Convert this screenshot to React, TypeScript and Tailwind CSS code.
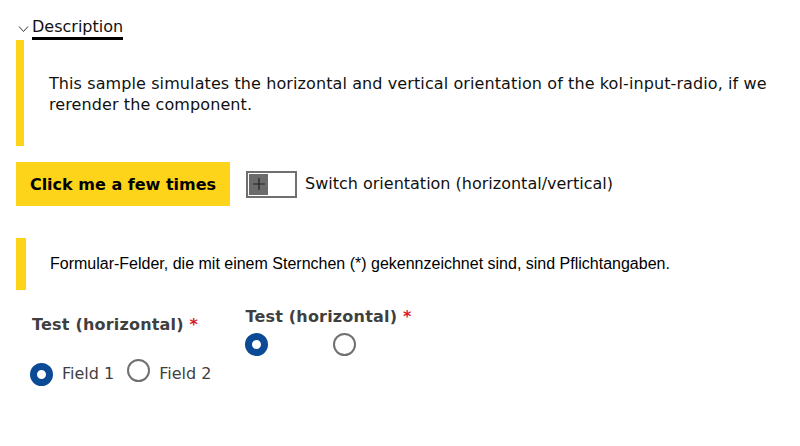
const verdana = "font-['DejaVu_Sans',Verdana,sans-serif]";

function Radio({ checked }: { checked?: boolean }) {
  return checked ? (
    <span className="inline-block w-[23px] h-[23px] rounded-full border-[7px] border-[#0b4a94] bg-white shrink-0" />
  ) : (
    <span className="inline-block w-[23px] h-[23px] rounded-full border-2 border-[#707070] bg-white shrink-0" />
  );
}

function Label({ text }: { text: string }) {
  return (
    <span className="text-[16px] font-bold text-[#3f3f3f] tracking-[0.2px]">
      {text} <span className="text-[#d81b2a]">*</span>
    </span>
  );
}

export default function App() {
  return (
    <div className={`${verdana} min-h-screen bg-white text-[#111] px-4 pt-[16px]`}>
      <div className="flex items-center h-[24px] pl-[2px]">
        <svg width="11" height="8" viewBox="0 0 11 8" className="mt-[1px]">
          <polyline points="1,1.5 5.5,6.5 10,1.5" fill="none" stroke="#333" strokeWidth="1" />
        </svg>
        <span className="ml-[3px] text-[16px] leading-[20px] border-b-[3px] border-black">Description</span>
      </div>

      <div className="flex h-[106px]">
        <div className="w-[10px] bg-[#fdd419]" />
        <p className="pl-[25px] pt-[33px] text-[16px] leading-[21px] tracking-[0.1px]">
          This sample simulates the horizontal and vertical orientation of the kol-input-radio, if we rerender the component.
        </p>
      </div>

      <div className="flex items-center mt-[16px] gap-4">
        <button className="h-[44px] w-[214px] pt-[1px] bg-[#fdd419] text-[16px] font-bold text-black">
          Click me a few times
        </button>
        <div className="flex items-center gap-[8px]">
          <div className="w-[51px] h-[27px] border-2 border-[#707070] p-[1px] bg-white">
            <div className="w-[19px] h-full bg-[#6b6b6b] flex items-center justify-center">
              <svg width="14" height="14" viewBox="0 0 14 14">
                <path d="M7 1V13M1 7H13" stroke="#222" strokeWidth="1.2" />
              </svg>
            </div>
          </div>
          <span className="text-[16px]">Switch orientation (horizontal/vertical)</span>
        </div>
      </div>

      <div className="flex mt-[32px] h-[52px]">
        <div className="w-[10px] bg-[#fdd419]" />
        <p className="pl-[24px] flex items-center font-['Liberation_Sans',Arial,sans-serif] text-[16px] text-black">
          Formular-Felder, die mit einem Sternchen (*) gekennzeichnet sind, sind Pflichtangaben.
        </p>
      </div>

      <div className="flex mt-[15px]">
        <div className="pl-[16px] pt-[8px]">
          <Label text="Test (horizontal)" />
          <div className="flex items-center mt-[22px] ml-[-2px] text-[16px] text-[#3f3f3f]">
            <Radio checked />
            <span className="ml-[9px]">Field 1</span>
            <span className="ml-[13px]"><Radio /></span>
            <span className="ml-[9px]">Field 2</span>
          </div>
        </div>
        <div className="ml-[34px]">
          <Label text="Test (horizontal)" />
          <div className="flex mt-[4px]">
            <Radio checked />
            <span className="ml-[65px]"><Radio /></span>
          </div>
        </div>
      </div>
    </div>
  );
}
